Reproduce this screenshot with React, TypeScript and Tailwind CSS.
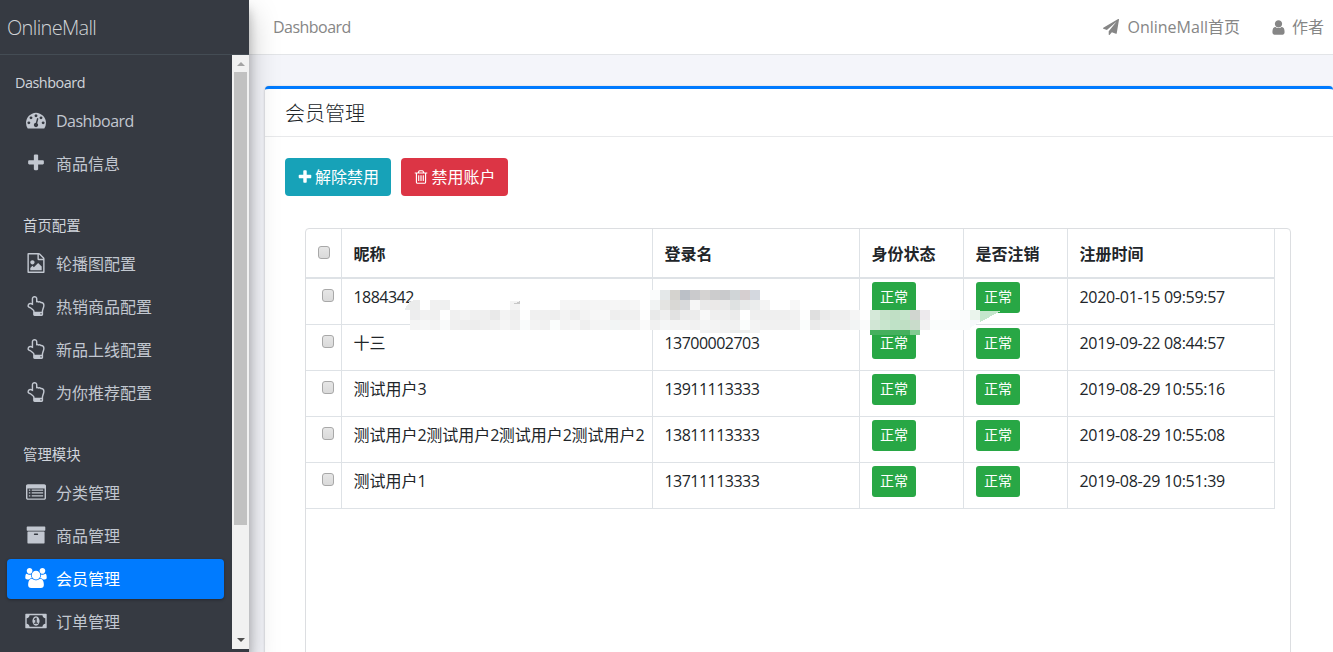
import type { ReactNode } from "react";

const ICONS = {
  dashboard:
    "M384 1152q0-53-37.5-90.5t-90.5-37.5-90.5 37.5-37.5 90.5 37.5 90.5 90.5 37.5 90.5-37.5 37.5-90.5zm192-448q0-53-37.5-90.5t-90.5-37.5-90.5 37.5-37.5 90.5 37.5 90.5 90.5 37.5 90.5-37.5 37.5-90.5zm428 481l101-382q6-26-7.5-48.5t-38.5-29.5-48 6.5-30 39.5l-101 382q-60 5-107 43.5t-63 98.5q-20 77 20 146t117 89 146-20 89-117q16-60-6-117t-72-91zm660-33q0-53-37.5-90.5t-90.5-37.5-90.5 37.5-37.5 90.5 37.5 90.5 90.5 37.5 90.5-37.5 37.5-90.5zm-640-640q0-53-37.5-90.5t-90.5-37.5-90.5 37.5-37.5 90.5 37.5 90.5 90.5 37.5 90.5-37.5 37.5-90.5zm448 192q0-53-37.5-90.5t-90.5-37.5-90.5 37.5-37.5 90.5 37.5 90.5 90.5 37.5 90.5-37.5 37.5-90.5zm320 448q0 261-141 483-19 29-54 29h-1402q-35 0-54-29-141-221-141-483 0-182 71-348t191-286 286-191 348-71 348 71 286 191 191 286 71 348z",
  plus: "M1600 736v192q0 40-28 68t-68 28h-416v416q0 40-28 68t-68 28h-192q-40 0-68-28t-28-68v-416h-416q-40 0-68-28t-28-68v-192q0-40 28-68t68-28h416v-416q0-40 28-68t68-28h192q40 0 68 28t28 68v416h416q40 0 68 28t28 68z",
  image:
    "M1596 380q28 28 48 76t20 88v1152q0 40-28 68t-68 28h-1344q-40 0-68-28t-28-68v-1600q0-40 28-68t68-28h896q40 0 88 20t76 48zm-444-244v376h376q-10-29-22-41l-313-313q-12-12-41-22zm384 1528v-1024h-416q-40 0-68-28t-28-68v-416h-768v1536h1280zm-128-448v320h-1024v-192l192-192 128 128 384-384zm-832-192q-80 0-136-56t-56-136 56-136 136-56 136 56 56 136-56 136-136 56z",
  hand: "M1408 1600q0-26-19-45t-45-19-45 19-19 45 19 45 45 19 45-19 19-45zm128-764q0-189-167-189-26 0-56 5-16-30-52.5-47.5t-73.5-17.5-69 18q-50-53-119-53-25 0-55.5 10t-47.5 25v-331q0-52-38-90t-90-38q-51 0-89.5 39t-38.5 89v576q-20 0-48.5-15t-55-33-68-33-84.5-15q-67 0-97.5 44.5t-30.5 115.5q0 24 139 90 44 24 65 37 64 40 145 112 81 71 106 101 57 69 57 140v32h640v-32q0-72 32-167t64-193.5 32-179.5zm128-5q0 133-69 322-59 164-59 223v288q0 53-37.5 90.5t-90.5 37.5h-640q-53 0-90.5-37.5t-37.5-90.5v-288q0-10-4.5-21.5t-14-23.5-18-22.5-22.5-24-21.5-20.5-21.5-19-17-14q-74-65-129-100-21-13-62-33t-72-37-63-40.5-49.5-55-17.5-69.5q0-125 67-206.5t189-81.5q68 0 128 22v-374q0-104 77-180t179-76q105 0 181 75.5t76 180.5v169q62 4 119 37 21-3 43-3 101 0 178 60 139-1 219.5 85t80.5 227z",
  list: "M160 192h1472q66 0 113 47t47 113v1088q0 66-47 113t-113 47h-1472q-66 0-113-47t-47-113v-1088q0-66 47-113t113-47zm-32 384v864q0 32 32 32h1472q32 0 32-32v-864zm128 96h128v112h-128zm0 256h128v112h-128zm0 256h128v112h-128zm256-512h1024v112h-1024zm0 256h1024v112h-1024zm0 256h1024v112h-1024z",
  archive:
    "M1088 832q0-26-19-45t-45-19h-256q-26 0-45 19t-19 45 19 45 45 19h256q26 0 45-19t19-45zm576-192v960q0 26-19 45t-45 19h-1408q-26 0-45-19t-19-45v-960q0-26 19-45t45-19h1408q26 0 45 19t19 45zm64-448v256q0 26-19 45t-45 19h-1536q-26 0-45-19t-19-45v-256q0-26 19-45t45-19h1536q26 0 45 19t19 45z",
  users:
    "M593 896q-162 5-265 128h-134q-82 0-138-40.5t-56-118.5q0-353 124-353 6 0 43.5 21t97.5 42.5 119 21.5q67 0 133-23-5 37-5 66 0 139 81 256zm1071 637q0 120-73 189.5t-194 69.5h-874q-121 0-194-69.5t-73-189.5q0-53 3.5-103.5t14-109 26.5-108.5 43-97.5 62-81 85.5-53.5 111.5-20q10 0 43 21.5t73 48 107 48 135 21.5 135-21.5 107-48 73-48 43-21.5q61 0 111.5 20t85.5 53.5 62 81 43 97.5 26.5 108.5 14 109 3.5 103.5zm-1024-1277q0 106-75 181t-181 75-181-75-75-181 75-181 181-75 181 75 75 181zm704 384q0 159-112.5 271.5t-271.5 112.5-271.5-112.5-112.5-271.5 112.5-271.5 271.5-112.5 271.5 112.5 112.5 271.5zm576 225q0 78-56 118.5t-138 40.5h-134q-103-123-265-128 81-117 81-256 0-29-5-66 66 23 133 23 59 0 119-21.5t97.5-42.5 43.5-21q124 0 124 353zm-128-609q0 106-75 181t-181 75-181-75-75-181 75-181 181-75 181 75 75 181z",
  money:
    "M768 1152h384v-96h-128v-448h-114l-148 137 77 80q42-37 55-57h2v288h-128zm512-256q0 70-21 142t-59.5 134-101.5 101-138 39-138-39-101.5-101-59.5-134-21-142 21-142 59.5-134 101.5-101 138-39 138 39 101.5 101 59.5 134 21 142zm512 256v-512q-106 0-181-75t-75-181h-1152q0 106-75 181t-181 75v512q106 0 181 75t75 181h1152q0-106 75-181t181-75zm128-832v1152q0 26-19 45t-45 19h-1792q-26 0-45-19t-19-45v-1152q0-26 19-45t45-19h1792q26 0 45 19t19 45z",
  plane:
    "M1764 11q33 24 27 64l-256 1536q-5 29-32 45-14 8-31 8-11 0-24-5l-453-185-242 295q-18 23-49 23-13 0-22-4-19-7-30.5-23.5t-11.5-36.5v-349l864-1059-1069 925-395-162q-37-14-40-55-2-40 32-59l1664-960q15-9 32-9 20 0 36 11z",
  user: "M1536 1399q0 109-62.5 187t-150.5 78h-854q-88 0-150.5-78t-62.5-187q0-85 8.5-160.5t31.5-152 58.5-131 94-89 134.5-34.5q131 128 313 128t313-128q76 0 134.5 34.5t94 89 58.5 131 31.5 152 8.5 160.5zm-256-887q0 159-112.5 271.5t-271.5 112.5-271.5-112.5-112.5-271.5 112.5-271.5 271.5-112.5 271.5 112.5 112.5 271.5z",
  trash:
    "M704 736v576q0 14-9 23t-23 9h-64q-14 0-23-9t-9-23v-576q0-14 9-23t23-9h64q14 0 23 9t9 23zm256 0v576q0 14-9 23t-23 9h-64q-14 0-23-9t-9-23v-576q0-14 9-23t23-9h64q14 0 23 9t9 23zm256 0v576q0 14-9 23t-23 9h-64q-14 0-23-9t-9-23v-576q0-14 9-23t23-9h64q14 0 23 9t9 23zm128 724v-948h-896v948q0 22 7 40.5t14.5 27 10.5 8.5h832q3 0 10.5-8.5t14.5-27 7-40.5zm-672-1076h448l-48-117q-7-9-17-11h-317q-10 2-17 11zm928 32v64q0 14-9 23t-23 9h-96v948q0 83-47 143.5t-113 60.5h-832q-66 0-113-58.5t-47-141.5v-952h-96q-14 0-23-9t-9-23v-64q0-14 9-23t23-9h309l70-167q15-37 54-63t79-26h320q40 0 79 26t54 63l70 167h309q14 0 23 9t9 23z",
};

type IconName = keyof typeof ICONS;

const WIDE: IconName[] = ["users", "money"];

const Icon = ({ name, className }: { name: IconName; className: string }) => (
  <svg
    viewBox={WIDE.includes(name) ? "0 0 1920 1792" : "0 0 1792 1792"}
    className={`shrink-0 ${className}`}
    fill="currentColor"
    fillRule={name === "list" ? "evenodd" : "nonzero"}
  >
    <path d={ICONS[name]} />
  </svg>
);

// latin runs are set tighter than the CJK around them
const Mixed = ({ text, tracking = "tracking-[-0.033em]" }: { text: string; tracking?: string }) => (
  <>
    {text.split(/([\x20-\x7e]+)/).map((part, idx) =>
      /^[\x20-\x7e]+$/.test(part) ? (
        <span key={idx} className={tracking}>
          {part}
        </span>
      ) : (
        part
      )
    )}
  </>
);

const NavHeader = ({ children, className }: { children: ReactNode; className: string }) => (
  <li className={`text-[14.4px] leading-[22px] text-[#d0d4db] ${className}`}>{children}</li>
);

const NavItem = ({ icon, label, active }: { icon: IconName; label: string; active?: boolean }) => (
  <li className="mb-[3px]">
    <a
      className={`flex h-10 items-center rounded pl-[18px] text-base ${
        active
          ? "bg-[#007bff] text-white shadow-[0_1px_3px_rgba(0,0,0,0.3)]"
          : "text-[#c2c7d0]"
      }`}
    >
      <span className="-mt-0.5 flex w-[22px] justify-center">
        <Icon name={icon} className={WIDE.includes(icon) ? "h-5 w-[22px]" : "h-5 w-5"} />
      </span>
      <span className="ml-[9px]">
        <Mixed text={label} />
      </span>
    </a>
  </li>
);

const Sidebar = () => (
  <aside className="relative z-10 flex h-full w-[249px] shrink-0 flex-col bg-[#363a42] shadow-[0_14px_28px_rgba(0,0,0,0.25),0_10px_10px_rgba(0,0,0,0.22)]">
    <div className="h-[55px] shrink-0 border-b border-[#444c54] pl-[7px] text-xl leading-[55px] font-light text-[#d0d3d6]">
      <Mixed text="OnlineMall" />
    </div>
    <div className="flex h-[594px]">
      <ul className="w-[232px] overflow-hidden pr-2 pl-[7px]">
        <NavHeader className="mt-[17px] mb-[7px] pl-2">
          <Mixed text="Dashboard" />
        </NavHeader>
        <NavItem icon="dashboard" label="Dashboard" />
        <NavItem icon="plus" label="商品信息" />
        <NavHeader className="mt-[31px] mb-[7px] pl-4">首页配置</NavHeader>
        <NavItem icon="image" label="轮播图配置" />
        <NavItem icon="hand" label="热销商品配置" />
        <NavItem icon="hand" label="新品上线配置" />
        <NavItem icon="hand" label="为你推荐配置" />
        <NavHeader className="mt-[31px] mb-[7px] pl-4">管理模块</NavHeader>
        <NavItem icon="list" label="分类管理" />
        <NavItem icon="archive" label="商品管理" />
        <NavItem icon="users" label="会员管理" active />
        <NavItem icon="money" label="订单管理" />
      </ul>
      <div className="flex w-[17px] flex-col items-center bg-[#f1f1f1]">
        <div className="flex h-[17px] items-center">
          <div className="border-x-4 border-b-4 border-x-transparent border-b-[#a3a3a3]" />
        </div>
        <div className="h-[453px] w-[13px] bg-[#c1c1c1]" />
        <div className="mt-auto flex h-[19px] items-center">
          <div className="border-x-4 border-t-4 border-x-transparent border-t-[#505050]" />
        </div>
      </div>
    </div>
  </aside>
);

const Navbar = () => (
  <nav className="flex h-[55px] shrink-0 items-center border-b border-[#e3e5e8] bg-white pr-[9px] pl-6 text-base text-[#868686]">
    <a>
      <Mixed text="Dashboard" />
    </a>
    <a className="ml-auto flex items-center">
      <Icon name="plane" className="mr-2 h-4 w-4" />
      <Mixed text="OnlineMall首页" tracking="tracking-normal" />
    </a>
    <a className="ml-[30px] flex items-center">
      <Icon name="user" className="mr-[5px] h-[17px] w-[17px]" />
      作者
    </a>
  </nav>
);

const users = [
  { nick: "1884342", login: "", time: "2020-01-15 09:59:57" },
  { nick: "十三", login: "13700002703", time: "2019-09-22 08:44:57" },
  { nick: "测试用户3", login: "13911113333", time: "2019-08-29 10:55:16" },
  { nick: "测试用户2测试用户2测试用户2测试用户2", login: "13811113333", time: "2019-08-29 10:55:08" },
  { nick: "测试用户1", login: "13711113333", time: "2019-08-29 10:51:39" },
];

const Checkbox = ({ className }: { className: string }) => (
  <span
    className={`block h-[13px] w-[12px] rounded-[3px] border border-[#a8a8a8] bg-linear-to-b from-[#e6e6e6] to-[#dadada] ${className}`}
  />
);

const Status = () => (
  <span className="mt-[2.5px] ml-[0.5px] flex h-[31px] w-[44px] items-center justify-center rounded-[3px] bg-[#28a745] text-sm text-white">
    正常
  </span>
);

const CELL = "border-r border-b border-[#dee2e6] pl-[11.5px] text-left align-top";

const UserTable = () => (
  <table className="w-[969px] table-fixed border-separate border-spacing-0 text-base text-[#212529]">
    <colgroup>
      <col className="w-[36px]" />
      <col className="w-[311px]" />
      <col className="w-[207px]" />
      <col className="w-[104px]" />
      <col className="w-[104px]" />
      <col className="w-[207px]" />
    </colgroup>
    <thead>
      <tr className="h-[50px]">
        <th className={`${CELL} border-b-2`}>
          <Checkbox className="mt-[17px] ml-[0.5px]" />
        </th>
        {["昵称", "登录名", "身份状态", "是否注销", "注册时间"].map((title) => (
          <th key={title} className={`${CELL} border-b-2 pt-[13px] leading-6 font-bold`}>
            {title}
          </th>
        ))}
      </tr>
    </thead>
    <tbody>
      {users.map((user) => (
        <tr key={user.time} className="h-[46px]">
          <td className={CELL}>
            <Checkbox className="mt-[10px] ml-[4.5px]" />
          </td>
          <td className={`${CELL} pt-1.5 leading-6 whitespace-nowrap`}>
            <Mixed text={user.nick} />
          </td>
          <td className={`${CELL} pt-1.5 leading-6`}>
            <Mixed text={user.login} />
          </td>
          <td className={CELL}>
            <Status />
          </td>
          <td className={CELL}>
            <Status />
          </td>
          <td className={`${CELL} pt-1.5 leading-6`}>
            <Mixed text={user.time} tracking="tracking-[-0.018em]" />
          </td>
        </tr>
      ))}
    </tbody>
  </table>
);

// 10px tiles, one string per row: x offset, y offset, colours
const MOSAIC: [number, number, string][] = [
  [245, 0, "fafcfc e4e8e9 d5d3cf bbc0c7 cacacc d5d3d2 cccccd c9cacc d0d5d7 d6cfd0 d4d8df"],
  [15, 10, "ffffff ffffff eff0f0"],
  [145, 10, "ffffff f5f5f5 f6f6f6 f4f4f4 f6f6f6 f4f4f4"],
  [185, 10, "f5f5f5 f4f4f4 f6f6f6 f4f4f4 f6f6f6"],
  [245, 10, "f1f3f3 e4e4e2 d9d8d5 d9dadc f6f6f6 eaeaea ebe9e8 eaeaea dfe2e2 e8eaea ebeded f4f4f4"],
  [385, 10, "f8f8f8"],
  [5, 20, "ededee f2f2f2 f0f0f0 fefefe f0f0f0 f3f3f3 f0f0f0 efefef e9e9e9 f3f3f3 eeeeee fefefe f0f0f0 f0f0f0 eeeeee f3f3f3 eeeeee f3f3f3 f7f7f7 f8f8f8 eeeeee f0f0f0 f0f0f0 fefefe e9eaea efefef e2e2e2 ebebeb ececec f8f8f8 efefef efefef ebebeb ffffff efefef efefef efefef efefef f2f2f2 fefefe dfdfdf ebebeb efefef efefef f5f5f5 fefefe"],
  [5, 30, "f4f4f4 f6f7f7 f3f3f3 f9fafa f0f0f0 eeeeee ededed efefef f1f1f1 f5f5f5 f0f0f0 f9fbfb f3f3f3 f1f1f1 fafdfc f3f3f3 f6f6f6 efefef f4f4f4 f4f5f5 f2f5f5 f3f3f3 f3f3f3 fafafa f1f1f1 f4f6f6 f3f3f3 f3f3f3 f1f1f1 f4f5f5 f3f3f3 f1f2f2 f1f1f1 fafdfc f3f3f3 f1f1f1 f1f1f1 f1f1f1 f1f1f1 fafdfc ebebeb f0f0f0 f0f0f0 f1f1f1 f2f4f4 fafbfb"],
  [465, 20, "d5e9d9 c6e2ca c0dfc5 c5e4cb d1d6d0 edeaed fefefe fefefe fcfdfd fafcfc eaf4ec"],
  [465, 30, "d1e6d5 c8e5cd bfe2c7 bfdfc4 c9dccb f2f2f2 fafdfc fafcfc fafcfc fafcfc"],
  [295, 40, "f2f2f2 f2f2f2 f2f2f2 ebedec eeeeee f4f4f4"],
];

const Mosaic = () => (
  <svg className="absolute top-[61px] left-[99px] h-[50px] w-[600px]" shapeRendering="crispEdges">
    {MOSAIC.map(([x, y, tiles]) =>
      tiles.split(" ").map((fill, idx) => (
        <rect
          key={`${x}-${y}-${idx}`}
          x={x + idx * 10}
          y={y}
          width={10}
          height={y === 40 ? 3 : 10}
          fill={`#${fill}`}
        />
      ))
    )}
    <path d="M-1 20q5-9 10-10h6v10z" fill="#ebecec" />
    <rect x={25} y={10} width={10} height={10} fill="#f1f1f1" />
    <rect x={105} y={11} width={10} height={9} fill="#f3f3f3" />
    <path d="M107 14q5-1 8-3v3z" fill="#c8c8c8" />
    <rect x={465} y={40} width={40} height={5} fill="#45b05d" />
    <rect x={505} y={40} width={10} height={5} fill="#83cb92" />
    <path d="M575 21h21l-21 11z" fill="#c4e6cc" />
    <path d="M565 30h10v2l-10 6z" fill="#f7f9fb" />
  </svg>
);

const App = () => (
  <div className="flex h-[652px] w-[1333px] overflow-hidden bg-[#f4f5fa] font-['Open_Sans','Noto_Sans_CJK_SC',sans-serif]">
    <Sidebar />
    <div className="flex min-w-0 flex-1 flex-col">
      <Navbar />
      <main className="flex-1 pt-[31px] pl-4">
        <div className="h-full rounded border-t-[3px] border-[#007bff] bg-white shadow-[0_0_1px_rgba(0,0,0,0.125),0_1px_3px_rgba(0,0,0,0.2)]">
          <h3 className="h-12 border-b border-[#e8e9eb] pl-5 text-xl leading-[49px] font-light text-[#212529]">
            会员管理
          </h3>
          <div className="pt-[20.5px] pl-5">
            <div className="flex gap-[10px] text-base text-white">
              <button className="flex h-[38px] w-[106px] items-center justify-center rounded bg-[#17a2b8]">
                <Icon name="plus" className="mr-[2px] h-4 w-4" />
                解除禁用
              </button>
              <button className="flex h-[38px] w-[107px] items-center justify-center rounded bg-[#dc3545]">
                <Icon name="trash" className="mr-[2px] h-4 w-4" />
                禁用账户
              </button>
            </div>
            <div className="relative mt-[32.5px] ml-5 h-[460px] w-[986px] rounded border border-[#dcdee1]">
              <UserTable />
              <Mosaic />
            </div>
          </div>
        </div>
      </main>
    </div>
  </div>
);

export default App;
